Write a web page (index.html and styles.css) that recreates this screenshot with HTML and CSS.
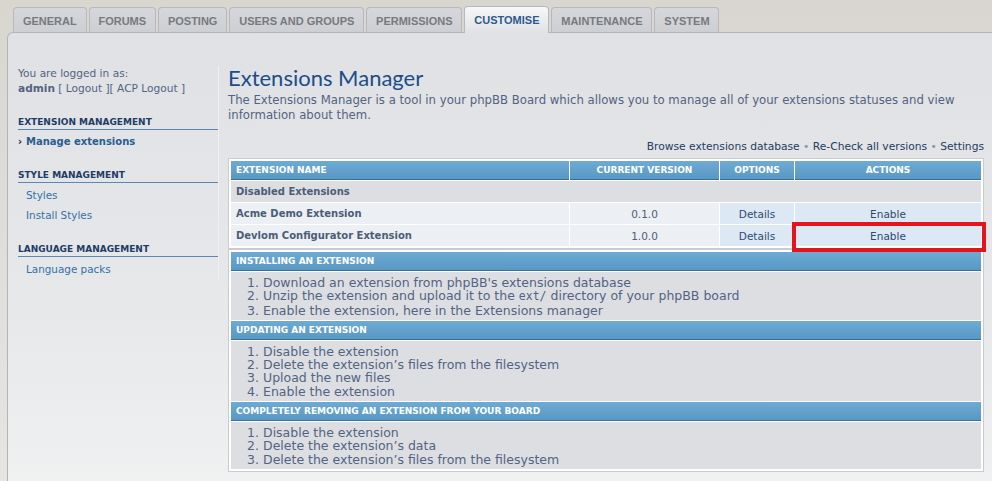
FILE: index.html
```html
<!DOCTYPE html>
<html lang="en">
<head>
<meta charset="utf-8">
<title>Extensions Manager</title>
<link rel="stylesheet" href="styles.css">
</head>
<body>
<nav class="tabs">
  <a class="tab">GENERAL</a>
  <a class="tab">FORUMS</a>
  <a class="tab">POSTING</a>
  <a class="tab">USERS AND GROUPS</a>
  <a class="tab">PERMISSIONS</a>
  <a class="tab tab-active">CUSTOMISE</a>
  <a class="tab">MAINTENANCE</a>
  <a class="tab">SYSTEM</a>
</nav>
<div class="panel">
  <aside class="sidebar">
    <div class="login">You are logged in as:<br><b>admin</b> [ Logout ][ ACP Logout ]</div>
    <div class="menu-head first">EXTENSION MANAGEMENT</div>
    <ul class="menu">
      <li class="menu-item active">Manage extensions</li>
    </ul>
    <div class="menu-head">STYLE MANAGEMENT</div>
    <ul class="menu">
      <li class="menu-item">Styles</li>
      <li class="menu-item">Install Styles</li>
    </ul>
    <div class="menu-head">LANGUAGE MANAGEMENT</div>
    <ul class="menu">
      <li class="menu-item">Language packs</li>
    </ul>
  </aside>
  <main class="main">
    <h1 class="title">Extensions Manager</h1>
    <p class="intro">The Extensions Manager is a tool in your phpBB Board which allows you to manage all of your extensions statuses and view information about them.</p>
    <div class="quick-links">Browse extensions database <span class="dot">•</span> Re-Check all versions <span class="dot">•</span> Settings</div>
    <div class="box box-first">
      <table class="grid">
        <colgroup>
          <col class="c-name"><col class="c-ver"><col class="c-opt"><col class="c-act">
        </colgroup>
        <thead>
          <tr><th class="left">EXTENSION NAME</th><th>CURRENT VERSION</th><th>OPTIONS</th><th>ACTIONS</th></tr>
        </thead>
        <tbody>
          <tr><td class="group" colspan="4">Disabled Extensions</td></tr>
          <tr><td class="name">Acme Demo Extension</td><td class="ver">0.1.0</td><td class="opt">Details</td><td class="opt">Enable</td></tr>
          <tr><td class="name">Devlom Configurator Extension</td><td class="ver">1.0.0</td><td class="opt">Details</td><td class="opt marked">Enable<span class="highlight"></span></td></tr>
        </tbody>
      </table>
    </div>
    <div class="box">
      <table class="grid help">
        <tr><th class="left">INSTALLING AN EXTENSION</th></tr>
        <tr><td class="steps"><ol>
          <li>Download an extension from phpBB's extensions database</li>
          <li>Unzip the extension and upload it to the <code>ext/</code> directory of your phpBB board</li>
          <li>Enable the extension, here in the Extensions manager</li>
        </ol></td></tr>
        <tr><th class="left">UPDATING AN EXTENSION</th></tr>
        <tr><td class="steps"><ol>
          <li>Disable the extension</li>
          <li>Delete the extension’s files from the filesystem</li>
          <li>Upload the new files</li>
          <li>Enable the extension</li>
        </ol></td></tr>
        <tr><th class="left">COMPLETELY REMOVING AN EXTENSION FROM YOUR BOARD</th></tr>
        <tr><td class="steps"><ol>
          <li>Disable the extension</li>
          <li>Delete the extension’s data</li>
          <li>Delete the extension’s files from the filesystem</li>
        </ol></td></tr>
      </table>
    </div>
  </main>
</div>
</body>
</html>
```
FILE: styles.css
```css
* { box-sizing: border-box; }
html, body { margin: 0; padding: 0; }
body {
  height: 481px;
  overflow: hidden;
  background: linear-gradient(#d9d6d0, #e6e5e2);
  font-family: "DejaVu Sans", Verdana, sans-serif;
  font-size: 11px;
  color: #536482;
}

/* tabs */
.tabs {
  display: flex;
  align-items: flex-end;
  gap: 2px;
  height: 32px;
  padding-left: 13px;
}
.tab {
  display: flex;
  align-items: center;
  height: 25px;
  padding: 1px 8.9px 0;
  border: 1px solid #b8b9ba;
  border-bottom: 0;
  border-radius: 4px 4px 0 0;
  background: linear-gradient(#d5d7da, #cdcfd2);
  font-family: "Liberation Sans", Arial, sans-serif;
  font-weight: bold;
  font-size: 11px;
  color: #777a7e;
}
.tab-active {
  position: relative;
  z-index: 1;
  height: 27px;
  margin-bottom: -1px;
  padding-bottom: 1px;
  background: linear-gradient(#f6f7f8, #e0e2e5);
  color: #2d5a8e;
}

/* panel */
.panel {
  display: flex;
  align-items: flex-start;
  margin: 0 -20px 0 7px;
  height: 460px;
  padding: 33px 28px 0 10px;
  border: 1px solid #b3b4b6;
  border-bottom: 0;
  border-right: 0;
  border-radius: 6px 0 0 0;
  background: linear-gradient(#dfe1e4, #e6e8ea 60%, #f0f1f1);
}

/* sidebar */
.sidebar {
  width: 201px;
  flex: none;
  padding: 0 0 1px;
  border-right: 1px solid #eff0f2;
  line-height: 15px;
  font-size: 10.6px;
}
.login b { font-weight: bold; }
.menu-head {
  margin-top: 17.5px;
  width: 200px;
  line-height: 13px;
  border-bottom: 1px solid #5d87b1;
  font-size: 9px;
  font-weight: bold;
  color: #1f3c66;
}
.menu-head.first { margin-top: 19.5px; }
.menu {
  list-style: none;
  margin: 2px 0 0;
  padding: 0;
}
.menu-item {
  display: flex;
  line-height: 20px;
  padding-left: 8px;
  font-size: 10.4px;
  color: #3570a8;
}
.menu-item.active {
  padding-left: 0;
  font-weight: bold;
  font-size: 10px;
  color: #2a5d93;
}
.menu-item.active::before {
  content: "›";
  width: 8px;
  color: #222;
  font-weight: bold;
}

/* main */
.main {
  flex: 1;
  margin-left: 9px;
  min-width: 0;
}
.title {
  margin: -1px 0 0;
  font-family: Lato, "DejaVu Sans", sans-serif;
  font-weight: normal;
  font-size: 22px;
  line-height: 26px;
  color: #1d4d88;
}
.intro {
  margin: 2px 0 0;
  line-height: 15px;
  font-size: 11.7px;
}
.quick-links {
  margin-top: 16px;
  text-align: right;
  line-height: 15px;
  font-size: 10.7px;
  color: #233d62;
}
.dot { color: #8a97aa; }

.box {
  border: 1px solid #c9cbce;
  background: #fff;
  padding: 1px;
}
.box-first { margin-top: 4px; }
.grid {
  width: 100%;
  table-layout: fixed;
  border-spacing: 1px;
  border-collapse: separate;
}
.c-name { width: 338px; }
.c-ver { width: 149px; }
.c-opt { width: 74px; }
.c-act { width: 186px; }
.grid th {
  height: 19px;
  padding: 0 5px;
  border-bottom: 1px solid #3d6f95;
  background: linear-gradient(#6eabd4, #5898c4);
  color: #fff;
  font-size: 9px;
  font-weight: bold;
  text-align: center;
}
.grid th.left { text-align: left; }
.grid td {
  height: 21px;
  padding: 0 5px;
  font-size: 10.5px;
  color: #4c5d77;
}
.grid td.group {
  background: #dcdee2;
  font-weight: bold;
  font-size: 10px;
}
.grid td.name {
  background: #eceff3;
  font-weight: bold;
  font-size: 10px;
}
.grid td.ver {
  background: #eceff3;
  text-align: center;
}
.grid td.opt {
  background: #dde8f5;
  text-align: center;
  color: #2e4a6e;
}
.grid td.marked { position: relative; }
.highlight {
  position: absolute;
  left: -3px;
  right: -5px;
  top: -3px;
  bottom: -6px;
  border: 4px solid #e5141c;
}
.grid td.steps {
  height: auto;
  padding: 4px 0 3px;
  background: #dcdee2;
  font-size: 12.5px;
  line-height: 13.3px;
  color: #536482;
}
.steps ol {
  margin: 0;
  padding-left: 32px;
}
.steps code {
  font-family: "DejaVu Sans Mono", monospace;
  font-size: 11.5px;
}
```
